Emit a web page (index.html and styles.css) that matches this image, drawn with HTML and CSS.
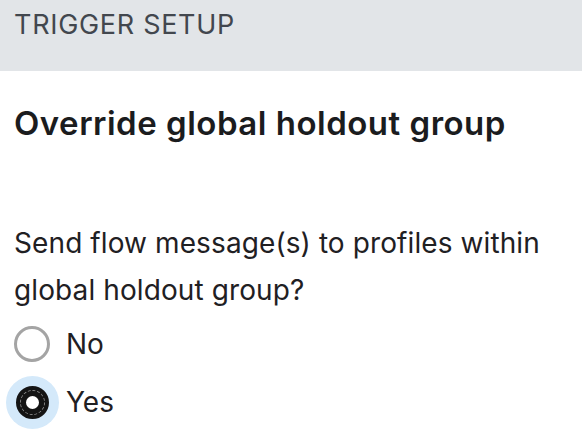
FILE: index.html
```html
<!DOCTYPE html>
<html lang="en">
<head>
    <meta charset="utf-8">
    <title>Trigger Setup</title>
    <link rel="stylesheet" href="styles.css">
</head>
<body>
    <div class="section-header">TRIGGER SETUP</div>

    <div class="content">
        <h2 class="title">Override global holdout group</h2>

        <p class="question">Send flow message(s) to profiles within global holdout group?</p>

        <!-- radio options -->
        <div class="options">
            <label class="option">
                <span class="radio"></span>
                <span class="option-label">No</span>
            </label>
            <label class="option">
                <span class="radio checked"></span>
                <span class="option-label">Yes</span>
            </label>
        </div>
    </div>
</body>
</html>
```

FILE: styles.css
```css
body {
    margin: 0;
    padding: 0;
    background-color: #fff;
    font-family: Inter, "Noto Sans", sans-serif;
    color: #1f2023;
}
.section-header {
    height: 71px;
    box-sizing: border-box;
    padding: 9px 14px 0;
    background-color: #e2e5e8;
    color: #42474e;
    font-size: 27px;
    line-height: 32px;
    letter-spacing: 0.7px;
}
.content {
    padding: 0 14px;
}
.title {
    margin: 32px 0 0;
    font-size: 33px;
    line-height: 40px;
    font-weight: 600;
    letter-spacing: 0.5px;
    color: #1b1c1e;
}
.question {
    margin: 77px 0 0;
    font-size: 28px;
    line-height: 47px;
    letter-spacing: 0.1px;
}
.options {
    display: flex;
    flex-direction: column;
    margin-top: 1px;
}
.option {
    display: flex;
    align-items: center;
    height: 58px;
    gap: 16px;
}
.option-label {
    font-size: 28px;
    line-height: 32px;
}
.radio {
    position: relative;
    width: 36px;
    height: 36px;
    box-sizing: border-box;
    border: 3px solid #a4a4a4;
    border-radius: 50%;
    flex-shrink: 0;
}
.radio.checked {
    width: 33px;
    height: 33px;
    margin: 1.5px;
    border: 10px solid #141414;
    background-color: #fff;
    box-shadow: 0 0 0 10px #d4e9fa;
}
/* faint focus line inside the ring */
.radio.checked::after {
    content: "";
    position: absolute;
    top: -6px;
    left: -6px;
    right: -6px;
    bottom: -6px;
    border: 1px dashed #8a8a8a;
    border-radius: 50%;
}
```
